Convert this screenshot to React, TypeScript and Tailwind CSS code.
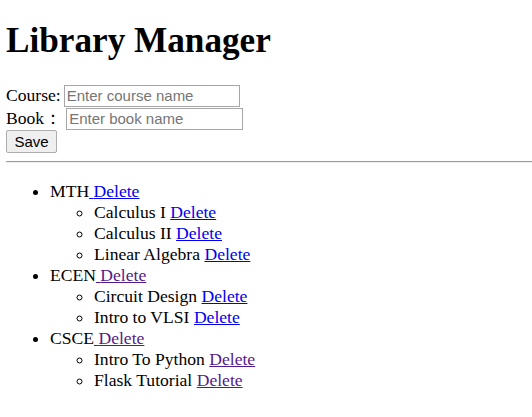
import React from "react";

type Course = { name: string; visited: boolean; books: { name: string; visited: boolean }[] };

const courses: Course[] = [
  {
    name: "MTH",
    visited: false,
    books: [
      { name: "Calculus I", visited: false },
      { name: "Calculus II", visited: false },
      { name: "Linear Algebra", visited: false },
    ],
  },
  {
    name: "ECEN",
    visited: true,
    books: [
      { name: "Circuit Design", visited: false },
      { name: "Intro to VLSI", visited: false },
    ],
  },
  {
    name: "CSCE",
    visited: true,
    books: [
      { name: "Intro To Python", visited: true },
      { name: "Flask Tutorial", visited: true },
    ],
  },
];

const linkCls = (visited: boolean) =>
  visited ? "underline text-[#551a8b]" : "underline text-[#0000ee]";

export default function App() {
  return (
    <div className="min-h-[417px] bg-white pl-[6px] font-['Liberation_Serif','Times_New_Roman',serif] text-[17.6px] leading-[21px] text-black">
      <h1 className="pt-[21px] pb-[23px] text-[35.2px] leading-[40px] font-bold">Library Manager</h1>

      {/* form */}
      <div className="flex flex-col">
        <div className="flex h-[23px] items-center">
          <span>Course:</span>
          <input
            placeholder="Enter course name"
            className="ml-[3px] h-[22px] w-[176px] border border-[#a6a6a6] px-[2px] font-['Liberation_Sans',Arial,sans-serif] text-[15px] placeholder:text-[#757575] outline-none"
          />
        </div>
        <div className="flex h-[23px] items-center">
          <span>Book：</span>
          <input
            placeholder="Enter book name"
            className="ml-[4px] h-[22px] w-[177px] border border-[#a6a6a6] px-[2px] font-['Liberation_Sans',Arial,sans-serif] text-[15px] placeholder:text-[#757575] outline-none"
          />
        </div>
        <div className="flex">
          <button className="h-[23px] w-[51px] rounded-[2px] border border-[#adadad] bg-[#efefef] font-['Liberation_Sans',Arial,sans-serif] text-[15px] leading-[20px]">
            Save
          </button>
        </div>
      </div>

      <hr className="mt-[8px] border-t border-b border-t-[#9a9a9a] border-b-[#eeeeee]" />

      <ul className="mt-[18px] list-disc pl-[44px]">
        {courses.map((c) => (
          <li key={c.name}>
            {c.name}
            <a href="#" className={linkCls(c.visited)}>
              {" "}Delete
            </a>
            <ul className="list-[circle] pl-[44px]">
              {c.books.map((b) => (
                <li key={b.name}>
                  {b.name}{" "}
                  <a href="#" className={linkCls(b.visited)}>
                    Delete
                  </a>
                </li>
              ))}
            </ul>
          </li>
        ))}
      </ul>
    </div>
  );
}
